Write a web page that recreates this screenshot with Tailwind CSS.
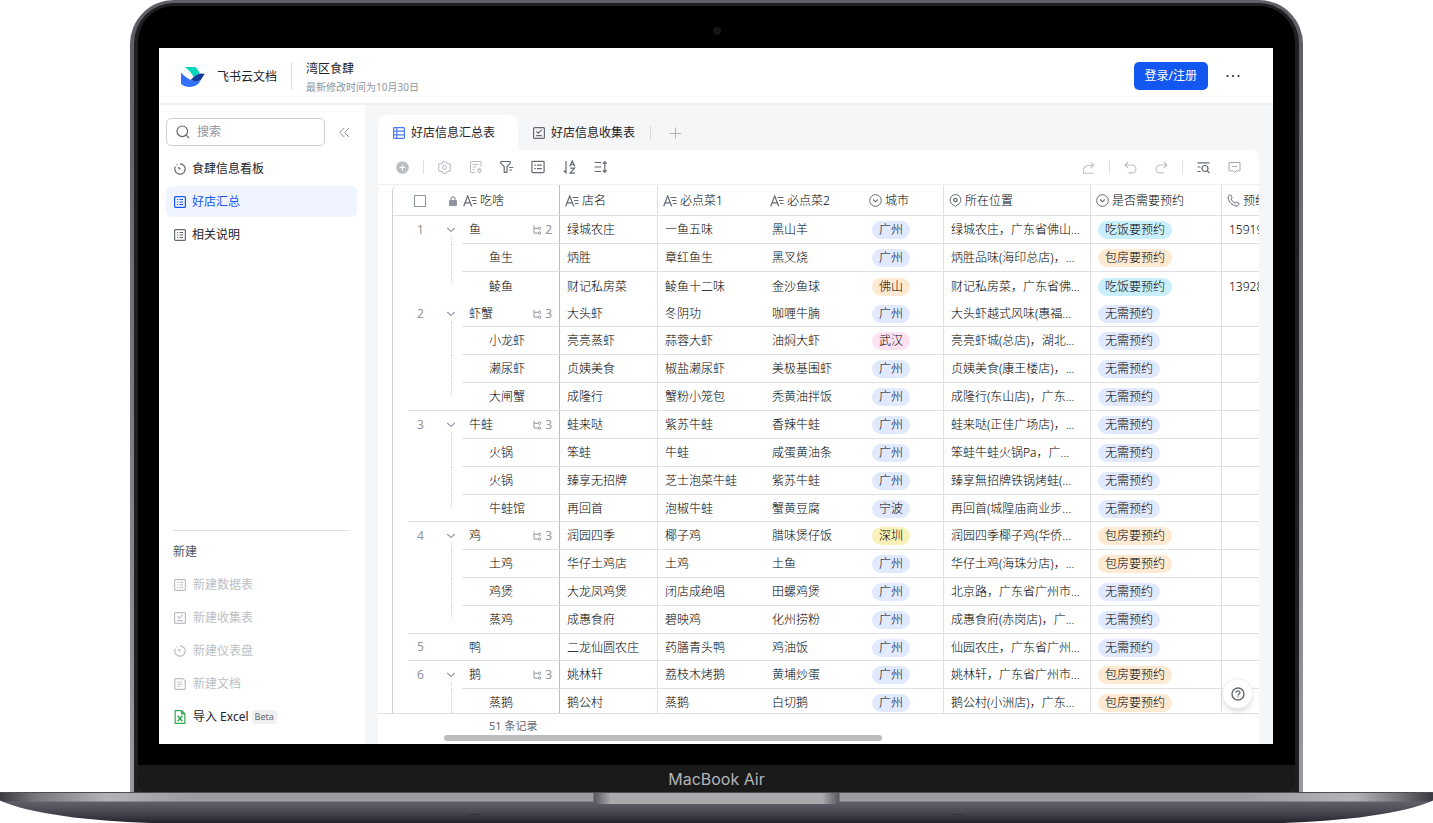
<!DOCTYPE html>
<html lang="zh-CN">
<head>
<meta charset="utf-8">
<title>湾区食肆 - 飞书云文档</title>
<script src="https://cdn.jsdelivr.net/npm/@tailwindcss/browser@4"></script>
</head>
<body class="bg-white font-['Noto_Sans','Noto_Sans_CJK_SC',sans-serif] text-xs text-[#1f2329]">
<svg class="hidden" aria-hidden="true">
  <defs>
    <symbol id="list" viewBox="0 0 12 12" fill="none" stroke="currentColor"><rect x=".6" y=".6" width="10.8" height="10.8" rx="1" stroke-width="1.2"/><path d="M3 3.500h1.200M5.500 3.500H9M3 6h1.200M5.500 6H9M3 8.500h1.200M5.500 8.500H9"/></symbol>
    <symbol id="check" viewBox="0 0 12 12" fill="none" stroke="currentColor"><rect x=".6" y=".6" width="10.8" height="10.8" rx="1" stroke-width="1.2"/><path d="M3.400 4.400l1.900 1.800 3.400-3.600M3.200 8.600h5.600" stroke-width="1.100"/></symbol>
    <symbol id="gauge" viewBox="0 0 12 12" fill="none" stroke="currentColor"><path d="M6 .8A5.200 5.200 0 1 1 1.400 3.600" stroke-width="1.200"/><path d="M2.600 2.200l.8-.6" stroke-width="1.200"/><path d="M4.300 4.300l2 2" stroke-width="1.500"/></symbol>
    <symbol id="doc" viewBox="0 0 12 12" fill="none" stroke="currentColor"><path d="M1.800.6h6.900l2.600 2.500v7.300a1 1 0 0 1-1 1H1.800a1 1 0 0 1-1-1V1.600a1 1 0 0 1 1-1z" stroke-width="1.200"/><path d="M3.300 4h5M3.300 6.200h5M3.300 8.400h3"/></symbol>
    <symbol id="text" viewBox="0 0 14 12" fill="none" stroke="currentColor"><path d="M.7 11.200L4.700 1l4 10.200M2.200 7.800h5" stroke-width="1.200"/><path d="M7.500 2.500h6M9 5.500h4.500M10 8.500h3.500"/></symbol>
    <symbol id="select" viewBox="0 0 13 13" fill="none" stroke="currentColor"><circle cx="6.500" cy="6.500" r="5.800"/><path d="M4.200 5.500l2.300 2.300 2.300-2.300" stroke-width="1.100"/></symbol>
    <symbol id="pin" viewBox="0 0 13 13" fill="none" stroke="currentColor"><path d="M4.600 11a5.400 5.400 0 1 1 3.800 0l-1.900 1.400z"/><circle cx="6.500" cy="6" r="1.700" stroke-width="1.300"/></symbol>
    <symbol id="phone" viewBox="0 0 13 13" fill="none" stroke="currentColor"><path d="M3.300.9c-1.300.2-2.500 1.500-2.200 3.100.8 4 4 7.400 8 8 1.500.2 2.800-.9 3-2.200L9.500 8 8 9.200C6.300 8.300 5 7 4 5.200L5.200 3.700z" stroke-linejoin="round"/></symbol>
    <symbol id="chev" viewBox="0 0 10 6" fill="none" stroke="currentColor"><path d="M1.300 1l3.700 3.600L8.700 1" stroke-width="1.100"/></symbol>
    <symbol id="tree" viewBox="0 0 9 10" fill="none" stroke="currentColor"><path d="M1 .5v7.600h4M1 3.300h4.300"/><circle cx="6.600" cy="3.300" r="1.200"/><circle cx="6.600" cy="8.100" r="1.200"/></symbol>
  </defs>
</svg>

<div class="flex h-screen min-h-[600px] flex-col">
  <!-- Lid -->
  <div class="mx-[130px] flex min-h-0 flex-1 rounded-t-[44px] bg-linear-to-b from-[#606067] from-10% to-[#9a9aa0] pt-[3px] px-[4px]">
    <div class="flex min-w-0 flex-1 flex-col rounded-t-[40px] bg-[#1f1f21] px-[4px] pt-[3px]">
      <div class="flex min-h-0 flex-1 flex-col rounded-t-[36px] rounded-b-xl bg-black">
        <div class="flex h-[42px] shrink-0 items-center justify-center pt-2"><span class="size-2 rounded-full border border-[#1b1b1d] bg-[#151517]"></span></div>

        <!-- Screen -->
        <div class="mr-[22px] ml-[21px] flex min-h-0 flex-1 flex-col overflow-hidden bg-white">
          <header class="flex h-[57px] shrink-0 items-center border-b-2 border-[#eff0f1] pr-[33px] pl-[22px]">
            <svg class="mt-[2px] h-5 w-6" viewBox="0 0 24 20"><path d="M4 0h10.500c2 1.700 3.300 4 4 6.600-2 .6-4 1.800-5.700 3.600C10.500 6.200 7.700 2.600 4 0z" fill="#00d6b9"/><path d="M0 5.600c4.500 4.600 8.300 7.500 15.200 8.700 2 .3 3.800-.3 4.800-1.500-2 4.300-6 7.100-11 7.100-3.600 0-6.700-1.200-9-3z" fill="#3370ff"/><path d="M24 7.100c-1.600 1-2.300 3.400-3.700 5.200-1.500 1.900-3.700 2.400-6 1.900-1.500-.3-3-.8-4.400-1.500C13.500 9 17.500 4.700 24 7.100z" fill="#133c9a"/></svg>
            <a href="#" class="ml-3 border-r border-[#dee0e3] pt-[7px] pb-[5px] pr-[14px] whitespace-nowrap">飞书云文档</a>
            <div class="ml-[14px] flex flex-col pt-[4px]">
              <h1 class="leading-[18px]">湾区食肆</h1>
              <p class="text-[10px] leading-[18px] text-[#8f959e]">最新修改时间为10月30日</p>
            </div>
            <button class="ml-auto h-7 rounded-[5px] bg-[#1456f0] px-[11px] text-white">登录/注册</button>
            <button class="ml-[18px]" aria-label="更多"><svg class="h-4 w-[14px]" viewBox="0 0 14 16" fill="#2b2f36"><circle cx="1.500" cy="8" r="1.100"/><circle cx="7" cy="8" r="1.100"/><circle cx="12.500" cy="8" r="1.100"/></svg></button>
          </header>

          <div class="flex min-h-0 flex-1">
            <!-- Sidebar -->
            <aside class="flex w-[206px] shrink-0 flex-col pt-[13px] pb-[11px] pl-[7px]">
              <div class="flex items-center">
                <label class="flex h-7 w-[159px] items-center gap-[7px] rounded-[5px] border border-[#d0d3d6] pl-[9px]">
                  <svg class="size-[14px] shrink-0 text-[#646a73]" viewBox="0 0 14 14" fill="none" stroke="currentColor" stroke-width="1.200"><circle cx="6.300" cy="6.300" r="5.300"/><path d="M10.200 10.200l2.800 2.800"/></svg>
                  <input type="text" aria-label="搜索" placeholder="搜索" class="w-full min-w-0 bg-transparent outline-none placeholder:text-[#8f959e]">
                </label>
                <button class="ml-[14px] text-[#8f959e]" aria-label="收起"><svg class="size-[11px]" viewBox="0 0 11 11" fill="none" stroke="currentColor"><path d="M5.200 1L.9 5.500l4.300 4.500M10 1L5.700 5.500 10 10"/></svg></button>
              </div>
              <nav class="mt-[7px] mr-2 flex flex-col gap-[2px]">
                <a href="#" class="flex h-[31px] items-center gap-[6px] rounded-md pl-2"><svg class="size-3 text-[#646a73]"><use href="#gauge"/></svg>食肆信息看板</a>
                <a href="#" class="flex h-[31px] items-center gap-[6px] rounded-md bg-[#f0f4ff] pl-2 text-[#1456f0]"><svg class="size-3"><use href="#list"/></svg>好店汇总</a>
                <a href="#" class="flex h-[31px] items-center gap-[6px] rounded-md pl-2"><svg class="size-3 text-[#646a73]"><use href="#list"/></svg>相关说明</a>
              </nav>
              <div class="mt-auto mr-[15px] ml-[7px] flex flex-col border-t border-[#dee0e3] pt-1">
                <h2 class="flex h-[33px] items-center text-[#51565d]">新建</h2>
                <button disabled class="flex h-[33px] items-center gap-[7px] pl-px text-[#bbbfc4]"><svg class="size-3"><use href="#list"/></svg>新建数据表</button>
                <button disabled class="flex h-[33px] items-center gap-[7px] pl-px text-[#bbbfc4]"><svg class="size-3"><use href="#check"/></svg>新建收集表</button>
                <button disabled class="flex h-[33px] items-center gap-[7px] pl-px text-[#bbbfc4]"><svg class="size-3"><use href="#gauge"/></svg>新建仪表盘</button>
                <button disabled class="flex h-[33px] items-center gap-[7px] pl-px text-[#bbbfc4]"><svg class="size-3"><use href="#doc"/></svg>新建文档</button>
                <button class="flex h-[33px] items-center gap-[7px] pl-px"><svg class="h-[14px] w-3" viewBox="0 0 12 14" fill="none" stroke="#35a853"><path d="M1.200.7h6.500l3.200 3v9.600H1.200zM7.500.7v3.200h3.200" stroke-width="1.200"/><path d="M3.700 5.800l4.600 5.400M8.300 5.800l-4.600 5.400" stroke-width="1.500"/></svg><span>导入 Excel</span><span class="-ml-1 rounded-sm bg-[#eff0f1] px-[3px] text-[9px] leading-[14px] text-[#646a73]">Beta</span></button>
              </div>
            </aside>

            <!-- Workspace -->
            <main class="relative flex min-w-0 flex-1 flex-col bg-[#f5f6f7] pt-[10px] pr-[14px] pl-[13px]">
              <div class="flex h-[35px] shrink-0 items-center">
                <button class="flex h-full w-[140px] items-center gap-[6px] rounded-t-lg bg-white pl-[15px]">
                  <svg class="size-3 text-[#4e7cf6]" viewBox="0 0 12 12" fill="none" stroke="currentColor"><rect x=".6" y=".6" width="10.800" height="10.800" rx=".8" stroke-width="1.200"/><path d="M3.800.6v10.800M.6 4.200h10.800M.6 7.800h10.800" stroke-width="1.200"/></svg>好店信息汇总表</button>
                <button class="flex h-full items-center gap-[6px] pr-[15px] pl-[15px]"><svg class="size-3 text-[#646a73]"><use href="#check"/></svg>好店信息收集表</button>
                <span class="h-[14px] w-px bg-[#d6d8db]"></span>
                <button class="ml-[18px] text-[#b1b5ba]" aria-label="添加"><svg class="size-3" viewBox="0 0 12 12" fill="none" stroke="currentColor"><path d="M6.500.5v11M.5 6.500h12"/></svg></button>
              </div>

              <section class="flex min-h-0 flex-1 flex-col overflow-hidden rounded-tr-lg bg-white">
                <div class="flex h-[35px] shrink-0 items-center border-b border-[#eff0f1] px-[18px] text-[#646a73]">
                  <button aria-label="添加记录"><svg class="size-[13px]" viewBox="0 0 13 13"><circle cx="6.500" cy="6.500" r="6.300" fill="#bbbfc4"/><path d="M6.500 3.700v5.600M3.700 6.500h5.600" stroke="#fff" stroke-width="1.100"/></svg></button>
                  <span class="ml-[14px] h-[14px] w-px bg-[#dee0e3]"></span>
                  <button class="ml-[14px] text-[#bbbfc4]" aria-label="设置"><svg class="size-[13px]" viewBox="0 0 13 13" fill="none" stroke="currentColor"><path d="M5 .8h3l.8 1.500 1.300.7 1.700-.1 1 2.300-.9 1.300.9 1.400-1 2.200-1.700-.1-1.300.8-.8 1.400H5l-.8-1.400-1.300-.8-1.700.1-1-2.200.9-1.400-.9-1.300 1-2.300 1.700.1 1.300-.7z" stroke-width="1.100" stroke-linejoin="round"/><circle cx="6.500" cy="6.500" r="1.900" stroke-width="1.100"/></svg></button>
                  <button class="ml-[18px] text-[#bbbfc4]" aria-label="表单"><svg class="size-[14px]" viewBox="0 0 14 14" fill="none" stroke="currentColor"><path d="M6.500 12.500H2.500a1 1 0 0 1-1-1v-9a1 1 0 0 1 1-1h8.500a1 1 0 0 1 1 1v4M3.500 4.500h6M3.500 7h4M3.500 9.500h2" stroke-width="1.100"/><circle cx="10.500" cy="10.600" r="1.600" stroke-width="1.300"/><path d="M10.500 7.900v1M10.500 12.300v1"/></svg></button>
                  <button class="ml-[17px]" aria-label="筛选"><svg class="size-[14px]" viewBox="0 0 14 14" fill="none" stroke="currentColor" stroke-width="1.200"><path d="M.8 1.500h9.400v1.600L7 6.700v5.600H4.200V6.700L.8 3.100z" stroke-linejoin="round"/><path d="M9.200 7.500h4M9.200 10h3"/></svg></button>
                  <button class="ml-[17px]" aria-label="分组"><svg class="size-[14px]" viewBox="0 0 14 14" fill="none" stroke="currentColor"><rect x=".9" y="1.400" width="12.200" height="11.200" rx=".8" stroke-width="1.200"/><path d="M3.300 5.200h1.500M6 5.200h4.800M3.300 8.600h1.500M6 8.600h4.800" stroke-width="1.200"/></svg></button>
                  <button class="ml-[18px]" aria-label="排序"><svg class="size-[14px]" viewBox="0 0 14 14" fill="none" stroke="currentColor" stroke-width="1.200"><path d="M3 1v11.800L.8 10.500M6.800 6.400L9.300.9l2.500 5.500M7.600 4.700h3.400M7.200 8.200h4.300l-4.400 4.900h4.800"/></svg></button>
                  <button class="ml-[17px]" aria-label="行高"><svg class="size-[14px]" viewBox="0 0 14 14" fill="none" stroke="currentColor" stroke-width="1.200"><path d="M.6 2.500h6.600M.6 7h6.600M.6 11.500h6.600M10.800 2v10M8.900 3.800l1.900-2.100 1.900 2.100M8.900 10.200l1.900 2.100 1.900-2.100"/></svg></button>

                  <button class="ml-auto text-[#bbbfc4]" aria-label="分享"><svg class="size-[13px]" viewBox="0 0 13 13" fill="none" stroke="currentColor" stroke-width="1.100"><path d="M1.500 9.200v3h10M1.500 8.500c.8-2.700 3-4.200 6.500-4.200h3.500M8.600 1.300l3 3-3 3"/></svg></button>
                  <span class="ml-[14px] h-[14px] w-px bg-[#dee0e3]"></span>
                  <button class="ml-[14px] text-[#bbbfc4]" aria-label="撤销"><svg class="size-[13px]" viewBox="0 0 13 13" fill="none" stroke="currentColor" stroke-width="1.100"><path d="M4 1L1 4l3 3M1 4h7a3.900 3.900 0 0 1 0 7.900H4.500"/></svg></button>
                  <button class="ml-[18px] text-[#bbbfc4]" aria-label="重做"><svg class="size-[13px]" viewBox="0 0 13 13" fill="none" stroke="currentColor" stroke-width="1.100"><path d="M9 1l3 3-3 3M12 4H5a3.900 3.900 0 0 0 0 7.900h3.500"/></svg></button>
                  <span class="ml-[14px] h-[14px] w-px bg-[#dee0e3]"></span>
                  <button class="ml-[14px]" aria-label="查找"><svg class="size-[13px]" viewBox="0 0 13 13" fill="none" stroke="currentColor" stroke-width="1.200"><path d="M.5 1.800h12M.5 6h3M.5 10.500h3"/><circle cx="8" cy="7.500" r="3"/><path d="M10.200 9.700l2.300 2.300"/></svg></button>
                  <button class="ml-[18px] text-[#a6abb1]" aria-label="评论"><svg class="size-[13px]" viewBox="0 0 13 13" fill="none" stroke="currentColor"><path d="M1 1.500h11v8.300H8.200l-1.700 1.700-1.700-1.700H1zM4 5.500h5"/></svg></button>
                </div>

                <div class="flex min-h-0 flex-1 border-b border-[#dee0e3] pl-[14px]">
                  <div class="min-w-0 flex-1 overflow-hidden rounded-tl-md border-l border-[#d0d3d6]">
                    <table class="w-[976px] table-fixed border-separate border-spacing-0 text-left font-light text-black">
                      <colgroup><col class="w-[15px]"><col class="w-[54px]"><col class="w-[98px]"><col class="w-[98px]"><col class="w-[107px]"><col class="w-[99px]"><col class="w-[80px]"><col class="w-[147px]"><col class="w-[131px]"><col class="w-[147px]"></colgroup>
                      <thead><tr id="head" class="h-[31px] whitespace-nowrap"></tr></thead>
                      <tbody id="rows"></tbody>
                    </table>
                  </div>
                </div>

                <footer class="flex h-[30px] shrink-0 flex-col justify-between pb-[3px]">
                  <p class="pt-1 pl-[111px] text-[11px] leading-4 text-[#646a73]">51 条记录</p>
                  <div class="ml-[66px] h-[6px] w-[438px] shrink-0 rounded-full bg-[#bbbcbe]"></div>
                </footer>
              </section>

              <button class="absolute right-5 bottom-[35px] flex size-[31px] items-center justify-center rounded-full border border-[#eff0f1] bg-white text-[#646a73] shadow-md" aria-label="帮助"><svg class="size-[14px]" viewBox="0 0 14 14" fill="none" stroke="currentColor" stroke-width="1.400"><circle cx="7" cy="7" r="6"/><path d="M5.100 5.700c0-2.500 3.900-2.400 3.800 0 0 1.300-1.900 1.300-1.900 2.700M7 9.400v1.200"/></svg></button>
            </main>
          </div>
        </div>

        <div class="h-[21px] shrink-0"></div>
        <div class="flex h-[27px] shrink-0 items-center justify-center rounded-b-xl bg-[#1a1a1a] pt-px font-['Inter','Liberation_Sans',sans-serif] text-base text-[#b4b4b8]">MacBook Air</div>
      </div>
    </div>
  </div>

  <!-- Base -->
  <svg class="block h-[31px] w-full shrink-0" viewBox="0 0 1433 31" preserveAspectRatio="none">
    <defs>
      <linearGradient id="edge"><stop offset="0" stop-color="#3a3a42"/><stop offset=".025" stop-color="#77777d"/><stop offset=".075" stop-color="#b4b4b8"/><stop offset=".13" stop-color="#9c9ca1"/><stop offset=".87" stop-color="#9c9ca1"/><stop offset=".945" stop-color="#b4b4b8"/><stop offset=".975" stop-color="#77777d"/><stop offset="1" stop-color="#3a3a42"/></linearGradient>
      <linearGradient id="under" x2="0" y2="1"><stop offset="0" stop-color="#62636b"/><stop offset=".5" stop-color="#484953"/><stop offset="1" stop-color="#23232e"/></linearGradient>
      <linearGradient id="notch"><stop offset="0" stop-color="#55555b"/><stop offset=".07" stop-color="#a9a9ae"/><stop offset=".93" stop-color="#a9a9ae"/><stop offset="1" stop-color="#55555b"/></linearGradient>
    </defs>
    <path d="M0 8.500C30 22 90 29 150 31H1283C1343 29 1403 22 1433 8.500z" fill="url(#under)"/>
    <path d="M0 0H1433V8.500L1430 9.500H3L0 8.500z" fill="url(#edge)"/>
    <path d="M0 .5H1433" stroke="#4c4c51"/>
    <path d="M593.500 1H839.500V8c0 3-2 4-6 4H600c-4 0-6.500-1-6.500-4z" fill="url(#notch)"/>
    <path d="M468 22.500h12M953 22.500h12" stroke="#33333d"/>
  </svg>
</div>

<script>
const heads = [['text','店名','border-r'],['text','必点菜1',''],['text','必点菜2',''],['select','城市','border-r'],['pin','所在位置','border-r'],['select','是否需要预约','border-r'],['phone','预约电话','']];
const icon = (id, cls) => `<svg class="${cls}"><use href="#${id}"/></svg>`;
const line = 'border-[#dee0e3]';
document.getElementById('head').innerHTML =
  `<th class="border-b ${line}"></th>
   <th class="border-b ${line} pt-px font-light"><div class="flex items-center pl-[6px]"><input type="checkbox" aria-label="全选" class="size-3 appearance-none border border-[#8f959e] bg-white"><svg class="ml-auto mr-[5px] h-[10px] w-2" viewBox="0 0 8 10"><path d="M2 4.500V2.800a2 2 0 0 1 4 0v1.700" fill="none" stroke="#8f959e" stroke-width="1.200"/><rect y="4" width="8" height="6" rx="1" fill="#8f959e"/></svg></div></th>
   <th class="border-r border-b border-r-[#bbbfc4] border-b-[#dee0e3] pt-px font-light"><div class="flex items-center gap-[3px] pl-px"><svg class="h-3 w-[14px] text-[#646a73]"><use href="#text"/></svg>吃啥</div></th>` +
  heads.map(([i, t, b]) => `<th class="${b} border-b ${line} pt-px font-light"><div class="flex items-center gap-[3px] pl-[5px]">${icon(i, i === 'text' ? 'h-3 w-[14px] text-[#646a73]' : 'size-[13px] text-[#646a73]')}${t}</div></th>`).join('');

// [level, name, children, shop, dish 1, dish 2, city, place, booking, phone]; level: number = parent, 's' = child, 'e' = last child
const W = '无需预约', B = '包房要预约', C = '吃饭要预约', G = '广州';
const data = [
  [1,'鱼',2,'绿城农庄','一鱼五味','黑山羊',G,'绿城农庄，广东省佛山...',C,'15919'],
  ['s','鱼生',0,'炳胜','章红鱼生','黑叉烧',G,'炳胜品味(海印总店)，...',B,''],
  ['e','鲮鱼',0,'财记私房菜','鲮鱼十二味','金沙鱼球','佛山','财记私房菜，广东省佛...',C,'13928'],
  [2,'虾蟹',3,'大头虾','冬阴功','咖喱牛腩',G,'大头虾越式风味(惠福...',W,''],
  ['s','小龙虾',0,'亮亮蒸虾','蒜蓉大虾','油焖大虾','武汉','亮亮虾城(总店)，湖北...',W,''],
  ['s','濑尿虾',0,'贞姨美食','椒盐濑尿虾','美极基围虾',G,'贞姨美食(康王楼店)，...',W,''],
  ['e','大闸蟹',0,'成隆行','蟹粉小笼包','秃黄油拌饭',G,'成隆行(东山店)，广东...',W,''],
  [3,'牛蛙',3,'蛙来哒','紫苏牛蛙','香辣牛蛙',G,'蛙来哒(正佳广场店)，...',W,''],
  ['s','火锅',0,'笨蛙','牛蛙','咸蛋黄油条',G,'笨蛙牛蛙火锅Pa，广...',W,''],
  ['s','火锅',0,'臻享无招牌','芝士泡菜牛蛙','紫苏牛蛙',G,'臻享無招牌铁锅烤蛙(...',W,''],
  ['e','牛蛙馆',0,'再回首','泡椒牛蛙','蟹黄豆腐','宁波','再回首(城隍庙商业步...',W,''],
  [4,'鸡',3,'润园四季','椰子鸡','腊味煲仔饭','深圳','润园四季椰子鸡(华侨...',B,''],
  ['s','土鸡',0,'华仔土鸡店','土鸡','土鱼',G,'华仔土鸡(海珠分店)，...',B,''],
  ['s','鸡煲',0,'大龙凤鸡煲','闭店成绝唱','田螺鸡煲',G,'北京路，广东省广州市...',W,''],
  ['e','蒸鸡',0,'成惠食府','碧映鸡','化州捞粉',G,'成惠食府(赤岗店)，广...',W,''],
  [5,'鸭',0,'二龙仙圆农庄','药膳青头鸭','鸡油饭',G,'仙园农庄，广东省广州...',W,''],
  [6,'鹅',3,'姚林轩','荔枝木烤鹅','黄埔炒蛋',G,'姚林轩，广东省广州市...',B,''],
  ['s','蒸鹅',0,'鹅公村','蒸鹅','白切鹅',G,'鹅公村(小洲店)，广东...',B,'']
];
const tones = {'广州':'bg-[#e1e9ff]','宁波':'bg-[#e1e9ff]','佛山':'bg-[#feead2]','武汉':'bg-[#fde2f3]','深圳':'bg-[#faf1b8]','无需预约':'bg-[#e1e9ff]','包房要预约':'bg-[#feead2]','吃饭要预约':'bg-[#caeffc]'};
const tag = t => `<span class="inline-block rounded-full px-[7px] leading-[18px] ${tones[t]}">${t}</span>`;
const shortRows = [3, 10, 15];
document.getElementById('rows').innerHTML = data.map((r, i) => {
  const [lv, name, kids, shop, d1, d2, city, place, book, tel] = r;
  const parent = typeof lv === 'number';
  const bottom = i === 2 ? '' : 'border-b';
  const groupEnd = i !== 2 && (lv === 'e' || (parent && !kids)) ? 'border-b' : '';
  const cell = (c, b, pad = 'pl-[7px]') => `<td class="${b} ${bottom} ${line} ${pad} pt-px">${c}</td>`;
  const h = shortRows.includes(i) ? 'h-[27px]' : 'h-7';
  const guide = parent
    ? (kids ? `<button aria-label="收起" class="mt-[11px] block text-[#8f959e]">${icon('chev', 'h-[6px] w-[10px]')}</button><span class="mt-1 flex-1 border-l border-dotted border-[#d0d3d6]"></span>` : '')
    : `<span class="${lv === 'e' ? 'h-3' : 'flex-1'} border-l border-dotted border-[#d0d3d6]"></span>`;
  return `<tr class="${h} whitespace-nowrap">
    <td></td>
    <td class="${groupEnd} ${line} ${h} p-0"><div class="flex h-full"><span class="w-[25px] self-center text-center font-normal text-[#8f959e]">${parent ? lv : ''}</span><span class="mr-[6px] ml-auto flex h-full w-[10px] flex-col items-center">${guide}</span></div></td>
    <td class="${bottom} border-r border-r-[#bbbfc4] border-b-[#dee0e3] pt-px ${parent ? 'pl-[7px]' : 'pl-[27px]'}"><div class="flex items-center pr-[7px]">${name}${kids ? `<span class="ml-auto flex items-center gap-[3px] font-normal text-[#8f959e]">${icon('tree', 'h-[10px] w-[9px]')}${kids}</span>` : ''}</div></td>
    ${cell(shop, 'border-r')}${cell(d1, '')}${cell(d2, '')}${cell(tag(city), 'border-r', 'pl-2')}${cell(place, 'border-r')}${cell(tag(book), 'border-r')}${cell(tel, '')}
  </tr>`;
}).join('');
</script>
</body>
</html>
